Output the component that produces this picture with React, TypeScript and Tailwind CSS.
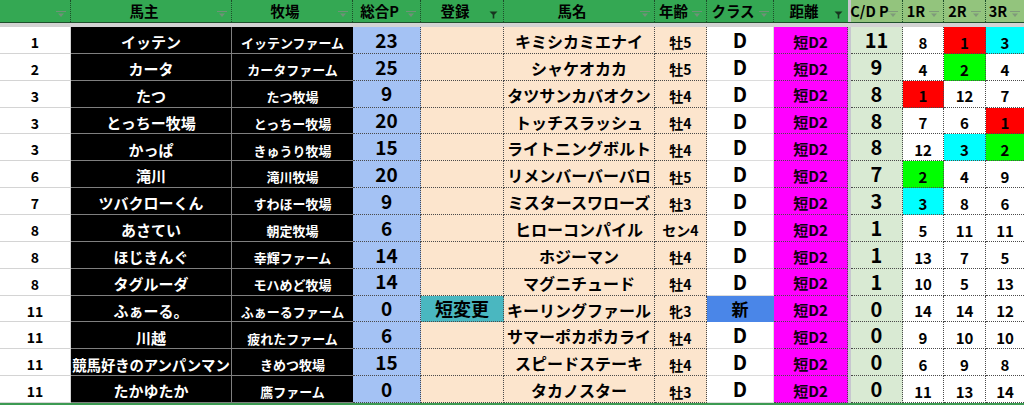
import React from "react"

type Row = {
  rank: string
  owner: string
  farm: string
  pts: string
  reg: string
  horse: string
  age: string
  cls: string
  dist: string
  cdp: string
  r: [string, string, string]
}

const rows: Row[] = [
  { rank: "1", owner: "イッテン", farm: "イッテンファーム", pts: "23", reg: "", horse: "キミシカミエナイ", age: "牡5", cls: "D", dist: "短D2", cdp: "11", r: ["8", "1", "3"] },
  { rank: "2", owner: "カータ", farm: "カータファーム", pts: "25", reg: "", horse: "シャケオカカ", age: "牡5", cls: "D", dist: "短D2", cdp: "9", r: ["4", "2", "4"] },
  { rank: "3", owner: "たつ", farm: "たつ牧場", pts: "9", reg: "", horse: "タツサンカバオクン", age: "牡4", cls: "D", dist: "短D2", cdp: "8", r: ["1", "12", "7"] },
  { rank: "3", owner: "とっちー牧場", farm: "とっちー牧場", pts: "20", reg: "", horse: "トッチスラッシュ", age: "牡4", cls: "D", dist: "短D2", cdp: "8", r: ["7", "6", "1"] },
  { rank: "3", owner: "かっぱ", farm: "きゅうり牧場", pts: "15", reg: "", horse: "ライトニングボルト", age: "牡4", cls: "D", dist: "短D2", cdp: "8", r: ["12", "3", "2"] },
  { rank: "6", owner: "滝川", farm: "滝川牧場", pts: "20", reg: "", horse: "リメンバーバーバロ", age: "牡5", cls: "D", dist: "短D2", cdp: "7", r: ["2", "4", "9"] },
  { rank: "7", owner: "ツバクローくん", farm: "すわほー牧場", pts: "9", reg: "", horse: "ミスタースワローズ", age: "牡3", cls: "D", dist: "短D2", cdp: "3", r: ["3", "8", "6"] },
  { rank: "8", owner: "あさてい", farm: "朝定牧場", pts: "6", reg: "", horse: "ヒローコンパイル", age: "セン4", cls: "D", dist: "短D2", cdp: "1", r: ["5", "11", "11"] },
  { rank: "8", owner: "ほじきんぐ", farm: "幸輝ファーム", pts: "14", reg: "", horse: "ホジーマン", age: "牡4", cls: "D", dist: "短D2", cdp: "1", r: ["13", "7", "5"] },
  { rank: "8", owner: "タグルーダ", farm: "モハめど牧場", pts: "14", reg: "", horse: "マグニチュード", age: "牡4", cls: "D", dist: "短D2", cdp: "1", r: ["10", "5", "13"] },
  { rank: "11", owner: "ふぁーる。", farm: "ふぁーるファーム", pts: "0", reg: "短変更", horse: "キーリングファール", age: "牝3", cls: "新", dist: "短D2", cdp: "0", r: ["14", "14", "12"] },
  { rank: "11", owner: "川越", farm: "疲れたファーム", pts: "6", reg: "", horse: "サマーポカポカライ", age: "牡4", cls: "D", dist: "短D2", cdp: "0", r: ["9", "10", "10"] },
  { rank: "11", owner: "競馬好きのアンパンマン", farm: "きめつ牧場", pts: "15", reg: "", horse: "スピードステーキ", age: "牡4", cls: "D", dist: "短D2", cdp: "0", r: ["6", "9", "8"] },
  { rank: "11", owner: "たかゆたか", farm: "鷹ファーム", pts: "0", reg: "", horse: "タカノスター", age: "牡3", cls: "D", dist: "短D2", cdp: "0", r: ["11", "13", "14"] },
]

// finishing position colours: 1st red, 2nd green, 3rd cyan
function raceBg(v: string) {
  if (v === "1") return "bg-[#ff0000]"
  if (v === "2") return "bg-[#00ff00]"
  if (v === "3") return "bg-[#00ffff]"
  return "bg-white"
}

const cols =
  "grid grid-cols-[71px_161px_121px_68px_83px_151px_52px_67px_74px_3px_52px_41px_42px_38px]"

function FilterIcon({ active = false, light = false }: { active?: boolean; light?: boolean }) {
  if (active) {
    return (
      <svg width="9" height="8" viewBox="0 0 9 8" className="absolute right-[5px] bottom-[3px]">
        <path d="M0.5 0.5 H8.5 L5.3 3.8 V7.5 H3.7 V3.8 Z" fill="#17351f" />
      </svg>
    )
  }
  const c = light ? "#7f9a7a" : "#6f9278"
  return (
    <svg width="10" height="7" viewBox="0 0 10 7" className="absolute right-[4px] bottom-[4px]">
      <rect x="0" y="0" width="10" height="1" fill={c} />
      <path d="M2 2.5 H8 L5 6 Z" fill={c} />
    </svg>
  )
}

function Head({
  label,
  light = false,
  active = false,
  last = false,
}: {
  label: string
  light?: boolean
  active?: boolean
  last?: boolean
}) {
  return (
    <div
      className={`relative flex items-center justify-center pr-[14px] text-[14.5px] font-bold text-black whitespace-nowrap ${
        light ? "bg-[#93c47d]" : "bg-[#34a853]"
      } ${last ? "" : "border-r border-dotted border-[#1d4d2a]"}`}
    >
      {label}
      <FilterIcon active={active} light={light} />
    </div>
  )
}

const dot = "border-b border-r border-dotted border-[#4a4a4a]"

export default function App() {
  return (
    <div
      className="w-[1024px] h-[405px] overflow-hidden bg-white"
      style={{ fontFamily: '"Noto Sans CJK JP", "Noto Sans", sans-serif' }}
    >
      {/* header */}
      <div className={`${cols} h-[23px] border-b border-[#1e4f2c]`}>
        <Head label="" />
        <Head label="馬主" />
        <Head label="牧場" />
        <Head label="総合P" />
        <Head label="登録" active />
        <Head label="馬名" />
        <Head label="年齢" />
        <Head label="クラス" />
        <Head label="距離" active last />
        <div className="bg-[#c7c7cf]" />
        <Head label="C/D P" light />
        <Head label="1R" light />
        <Head label="2R" light />
        <Head label="3R" light last />
      </div>
      {/* frozen pane split */}
      <div className="h-[4px] bg-[#d3d3d3]" />

      <div className={`${cols} h-[376px] grid-rows-[repeat(14,minmax(0,1fr))]`}>
        {rows.map((row, i) => (
          <React.Fragment key={i}>
            <div className="flex items-center justify-center pt-[5px] text-[14px] font-bold text-black border-b border-r border-[#d4d4d4]">
              {row.rank}
            </div>
            <div
              className={`flex items-center justify-center pt-[5px] overflow-hidden whitespace-nowrap bg-black text-white font-bold border-b border-r border-[#7f7f7f] ${
                row.owner.length > 10 ? "text-[14.4px] tracking-[-0.1px]" : "text-[15px]"
              }`}
            >
              {row.owner}
            </div>
            <div className="flex items-center justify-center pt-[6px] overflow-hidden whitespace-nowrap bg-black text-white text-[13px] font-bold border-b border-[#7f7f7f]">
              {row.farm}
            </div>
            <div className={`flex items-center justify-center bg-[#a4c2f4] text-[19px] font-bold text-black ${dot}`}>
              {row.pts}
            </div>
            <div
              className={`flex items-center justify-center text-[18px] font-bold text-black ${
                row.reg ? "bg-[#4ab7c0]" : "bg-[#fce5cd]"
              } ${dot}`}
            >
              {row.reg}
            </div>
            <div className={`flex items-center justify-center pt-[2px] overflow-hidden whitespace-nowrap bg-[#fce5cd] text-[16px] font-bold text-black ${dot}`}>
              {row.horse}
            </div>
            <div className={`flex items-center justify-center pt-[6px] whitespace-nowrap bg-[#fce5cd] text-[14px] font-bold text-black ${dot}`}>
              {row.age}
            </div>
            <div
              className={`flex items-center justify-center font-bold text-black border-b border-r ${
                row.cls === "新"
                  ? "bg-[#4a86e8] text-[17px] border-[#4a86e8]"
                  : "bg-white text-[20px] border-[#dcdcdc]"
              }`}
            >
              {row.cls}
            </div>
            <div className={`flex items-center justify-center pt-[4px] bg-[#ff00ff] text-[15px] font-bold text-[#120012] ${dot}`}>
              {row.dist}
            </div>
            <div className="bg-[#c7c7cf]" />
            <div className={`flex items-center justify-center bg-[#d9ead3] text-[20px] font-bold text-black ${dot}`}>
              {row.cdp}
            </div>
            {row.r.map((v, j) => (
              <div
                key={j}
                className={`flex items-center justify-center pt-[6px] text-[15px] font-bold text-black ${raceBg(v)} ${
                  j === 2 ? "border-b border-dotted border-[#4a4a4a]" : dot
                }`}
              >
                {v}
              </div>
            ))}
          </React.Fragment>
        ))}
      </div>
      <div className="h-[2px] bg-[#3c9a52]" />
    </div>
  )
}
